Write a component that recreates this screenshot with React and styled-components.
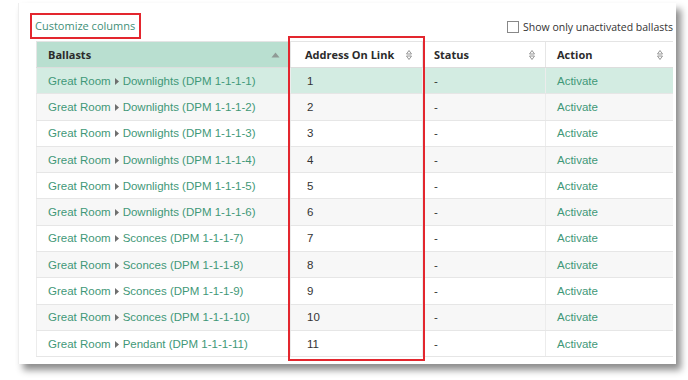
import React from "react";
import styled, { createGlobalStyle } from "styled-components";

const GlobalStyle = createGlobalStyle`
    body {
        margin : 0;
        background : #ffffff;
        font-family : "Liberation Sans", Arial, sans-serif;
    }
`

const Page = styled.div`
    width : 688px;
    height : 380px;
    padding : 3px 0 0 18px;
    box-sizing : border-box;
    overflow : hidden;
`

const Panel = styled.div`
    width : 658px;
    height : 361px;
    background : #ffffff;
    box-shadow : 5px 6px 7px rgba(0, 0, 0, 0.45);
    border-left : 1px solid #eeeeee;
    box-sizing : border-box;
    padding : 10px 4px 0 11px;
`

const TopBar = styled.div`
    display : flex;
    justify-content : space-between;
    align-items : flex-start;
    height : 28px;
`

const CustomizeLink = styled.a`
    display : block;
    border : 2px solid #e3262e;
    padding : 5px 4px 5px 3px;
    font-size : 11px;
    color : #3f8f78;
    text-decoration : none;
    line-height : 12px;
    font-family : "Open Sans", sans-serif;
`

const FilterLabel = styled.label`
    display : flex;
    align-items : center;
    gap : 4px;
    margin-top : 7px;
    margin-right : -1px;
    font-size : 10.5px;
    color : #333333;
    font-family : "Open Sans", sans-serif;
    white-space : nowrap;
`

const CheckBox = styled.span`
    width : 10px;
    height : 10px;
    border : 1px solid #888888;
    background : #ffffff;
`

const TableWrap = styled.div`
    position : relative;
    margin-left : 6px;
    width : 636px;
`

const Table = styled.table`
    width : 636px;
    border-collapse : collapse;
    table-layout : fixed;
    font-size : 11.5px;
`

const HeadCell = styled.th`
    height : 26px;
    padding : 0 10px 0 ${(p) => p.$pad || 11}px;
    text-align : left;
    font-family : "Open Sans", sans-serif;
    font-weight : bold;
    font-size : 11px;
    color : #2b2b2b;
    background : ${(p) => (p.$sorted ? "#b9dfd0" : "#ffffff")};
    border-top : 1px solid #e4e4e4;
    border-bottom : 1px solid #dddddd;
    border-left : 1px solid #e6e6e6;
    box-sizing : border-box;
`

const HeadInner = styled.div`
    display : flex;
    justify-content : space-between;
    align-items : center;
`

const Row = styled.tr`
    background : ${(p) => (p.$selected ? "#d3ece2" : p.$alt ? "#f7f7f7" : "#ffffff")};
`

const Cell = styled.td`
    height : 26.3px;
    padding : 0 6px 0 ${(p) => p.$pad || 11}px;
    border-bottom : 1px solid #e6e6e6;
    border-left : 1px solid #ececec;
    color : ${(p) => (p.$link ? "#3f9878" : "#333333")};
    white-space : nowrap;
    overflow : hidden;
    box-sizing : border-box;
`

const Arrow = styled.svg`
    margin : 0 4px 0 4px;
    vertical-align : 0px;
`

const Highlight = styled.div`
    position : absolute;
    left : 252px;
    top : -5px;
    width : 137px;
    height : 325px;
    border : 2px solid #e3262e;
    box-sizing : border-box;
    pointer-events : none;
`

const SortIcon = () => (
    <svg width="6" height="10" viewBox="0 0 6 10">
        <path d="M3 0.5 L5.5 4 L0.5 4 Z" fill="none" stroke="#8a8a8a" strokeWidth="0.9" />
        <path d="M3 9.5 L5.5 6 L0.5 6 Z" fill="none" stroke="#8a8a8a" strokeWidth="0.9" />
    </svg>
)

const SortUp = () => (
    <svg width="9" height="6" viewBox="0 0 9 6">
        <path d="M4.5 0.5 L8.5 5.5 L0.5 5.5 Z" fill="#8f9a95" />
    </svg>
)

const ballasts = [
    ["Downlights", "1-1-1-1"],
    ["Downlights", "1-1-1-2"],
    ["Downlights", "1-1-1-3"],
    ["Downlights", "1-1-1-4"],
    ["Downlights", "1-1-1-5"],
    ["Downlights", "1-1-1-6"],
    ["Sconces", "1-1-1-7"],
    ["Sconces", "1-1-1-8"],
    ["Sconces", "1-1-1-9"],
    ["Sconces", "1-1-1-10"],
    ["Pendant", "1-1-1-11"],
]

const App = () => {
    return (
        <Page>
            <GlobalStyle />
            <Panel>
                <TopBar>
                    <CustomizeLink href="#">Customize columns</CustomizeLink>
                    <FilterLabel>
                        <CheckBox />
                        Show only unactivated ballasts
                    </FilterLabel>
                </TopBar>
                <TableWrap>
                    <Table>
                        <colgroup>
                            <col style={{ width: 254 }} />
                            <col style={{ width: 132 }} />
                            <col style={{ width: 123 }} />
                            <col style={{ width: 127 }} />
                        </colgroup>
                        <thead>
                            <tr>
                                <HeadCell $sorted>
                                    <HeadInner>Ballasts <SortUp /></HeadInner>
                                </HeadCell>
                                <HeadCell $pad={14}>
                                    <HeadInner>Address On Link <SortIcon /></HeadInner>
                                </HeadCell>
                                <HeadCell>
                                    <HeadInner>Status <SortIcon /></HeadInner>
                                </HeadCell>
                                <HeadCell>
                                    <HeadInner>Action <SortIcon /></HeadInner>
                                </HeadCell>
                            </tr>
                        </thead>
                        <tbody>
                            {ballasts.map((b, i) => (
                                <Row key={b[1]} $selected={i === 0} $alt={i % 2 === 1}>
                                    <Cell $link>
                                        Great Room
                                        <Arrow width="4" height="7" viewBox="0 0 4 7">
                                            <path d="M0 0 L4 3.5 L0 7 Z" fill="#6f6f6f" />
                                        </Arrow>
                                        {b[0]} (DPM {b[1]})
                                    </Cell>
                                    <Cell $pad={16}>{i + 1}</Cell>
                                    <Cell>-</Cell>
                                    <Cell $link>Activate</Cell>
                                </Row>
                            ))}
                        </tbody>
                    </Table>
                    <Highlight />
                </TableWrap>
            </Panel>
        </Page>
    )
}

export default App;
